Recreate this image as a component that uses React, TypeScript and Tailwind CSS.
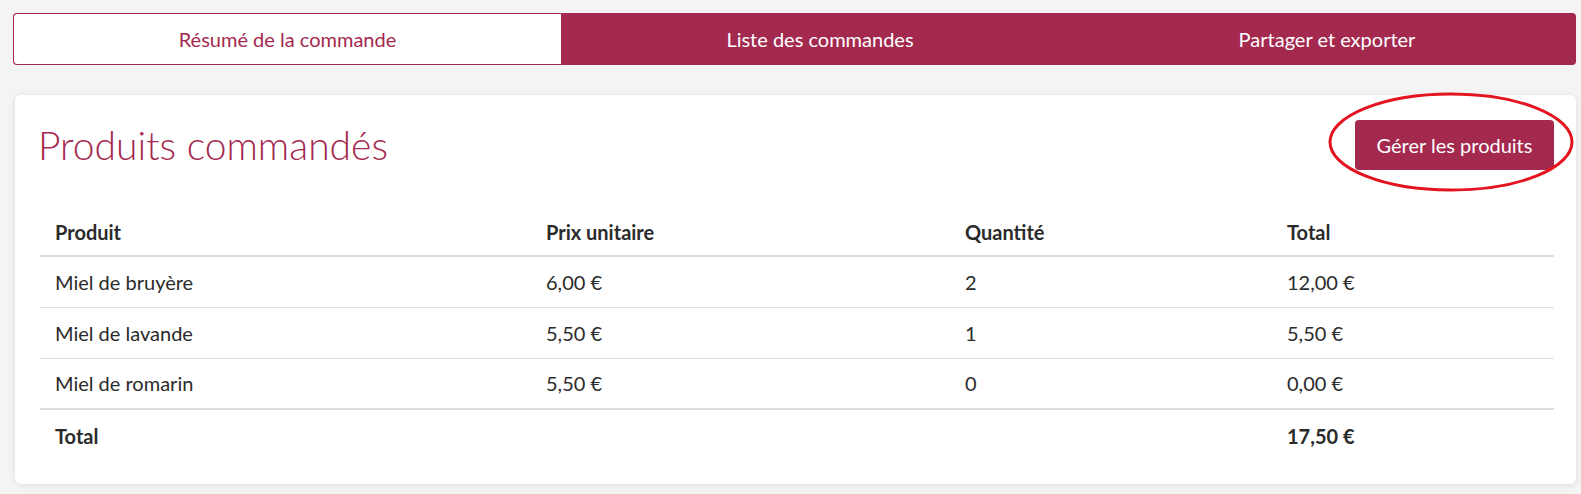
import React from "react";

const rows = [
  { name: "Miel de bruyère", price: "6,00 €", qty: "2", total: "12,00 €" },
  { name: "Miel de lavande", price: "5,50 €", qty: "1", total: "5,50 €" },
  { name: "Miel de romarin", price: "5,50 €", qty: "0", total: "0,00 €" },
];

export default function App() {
  return (
    <div
      className="relative min-h-[494px] w-[1581px] bg-[#f4f4f4] pl-[13px] pr-[5px] pt-[13px] text-[#2b2b2b]"
      style={{ fontFamily: 'Lato, "Open Sans", sans-serif' }}
    >
      {/* Tabs */}
      <div className="grid h-[52px] grid-cols-[549px_516px_1fr] overflow-hidden rounded-[4px] bg-[#a4294f] text-[20px]">
        <div className="flex items-center justify-center rounded-l-[4px] border border-[#a4294f] bg-white text-[#a4294f]">
          Résumé de la commande
        </div>
        <div className="flex items-center justify-center text-white">Liste des commandes</div>
        <div className="flex items-center justify-center text-white">Partager et exporter</div>
      </div>

      {/* Card */}
      <div className="ml-[2px] mt-[30px] rounded-[6px] bg-white pb-[23px] pl-[25px] pr-[22px] pt-[25px] shadow-[0_1px_6px_rgba(0,0,0,0.10)]">
        <div className="flex h-[50px] items-center justify-between">
          <h2 className="ml-[-2px] text-[39px] font-light leading-none text-[#a4294f]">Produits commandés</h2>
          <button className="h-[50px] w-[199px] rounded-[4px] bg-[#a4294f] text-[20px] text-white">
            Gérer les produits
          </button>
        </div>

        <table className="mt-[38px] w-full table-fixed border-collapse text-[20px]">
          <colgroup>
            <col className="w-[491px]" />
            <col className="w-[419px]" />
            <col className="w-[322px]" />
            <col />
          </colgroup>
          <thead>
            <tr className="h-[48px] border-b-2 border-[#dcdcdc] text-left">
              <th className="px-[15px] font-bold">Produit</th>
              <th className="px-[15px] font-bold">Prix unitaire</th>
              <th className="px-[15px] font-bold">Quantité</th>
              <th className="px-[15px] font-bold">Total</th>
            </tr>
          </thead>
          <tbody>
            {rows.map((r, i) => (
              <tr
                key={r.name}
                className={`h-[51px] ${i === rows.length - 1 ? "border-b-2 border-[#dcdcdc]" : "border-b border-[#e2e2e2]"}`}
              >
                <td className="px-[15px]">{r.name}</td>
                <td className="px-[15px]">{r.price}</td>
                <td className="px-[15px]">{r.qty}</td>
                <td className="px-[15px]">{r.total}</td>
              </tr>
            ))}
            <tr className="h-[52px] font-bold">
              <td className="px-[15px]">Total</td>
              <td className="px-[15px]"></td>
              <td className="px-[15px]"></td>
              <td className="px-[15px]">17,50 €</td>
            </tr>
          </tbody>
        </table>
      </div>

      {/* Red annotation ellipse */}
      <svg
        className="pointer-events-none absolute left-[1328px] top-[90px]"
        width="250"
        height="104"
        viewBox="0 0 250 104"
      >
        <ellipse cx="123" cy="52" rx="121" ry="48" fill="none" stroke="#e3141f" strokeWidth="3" />
      </svg>
    </div>
  );
}
